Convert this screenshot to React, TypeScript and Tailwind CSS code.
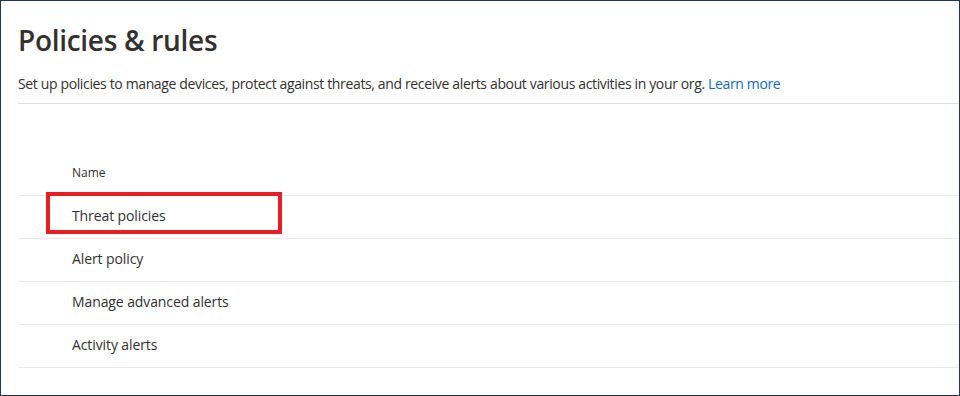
import React from 'react';

const rows = ['Threat policies', 'Alert policy', 'Manage advanced alerts', 'Activity alerts'];

export default function App() {
  return (
    <div
      className="relative w-[960px] h-[396px] bg-white border border-[#1f355c] overflow-hidden text-[#323130]"
      style={{ fontFamily: '"Open Sans", "Noto Sans", sans-serif' }}
    >
      {/* Header */}
      <div className="pl-[17px] pt-[19px]">
        <h1 className="text-[28px] leading-[40px] font-semibold tracking-[-0.3px]">Policies &amp; rules</h1>
        <p className="mt-[14px] text-[14px] leading-[20px] tracking-[-0.36px]">
          Set up policies to manage devices, protect against threats, and receive alerts about various activities in your org.{' '}
          <span className="text-[#0f6cbd]">Learn more</span>
        </p>
        <div className="mt-[9px] h-px bg-[#e1dfdd]" />
      </div>

      {/* Table */}
      <div className="pl-[17px] mt-[59px]">
        <div className="h-[32px] pl-[54px] text-[12px] leading-[20px] font-medium">Name</div>
        <div className="h-px bg-[#edebe9]" />
        {rows.map((r) => (
          <div key={r}>
            <div className="h-[42px] pl-[54px] pb-[3px] flex items-center text-[14px] font-medium tracking-[-0.1px]">{r}</div>
            <div className="h-px bg-[#edebe9]" />
          </div>
        ))}
      </div>

      {/* Highlight box */}
      <div className="absolute left-[45px] top-[191px] w-[236px] h-[42px] border-4 border-[#ea1c24]" />
    </div>
  );
}
